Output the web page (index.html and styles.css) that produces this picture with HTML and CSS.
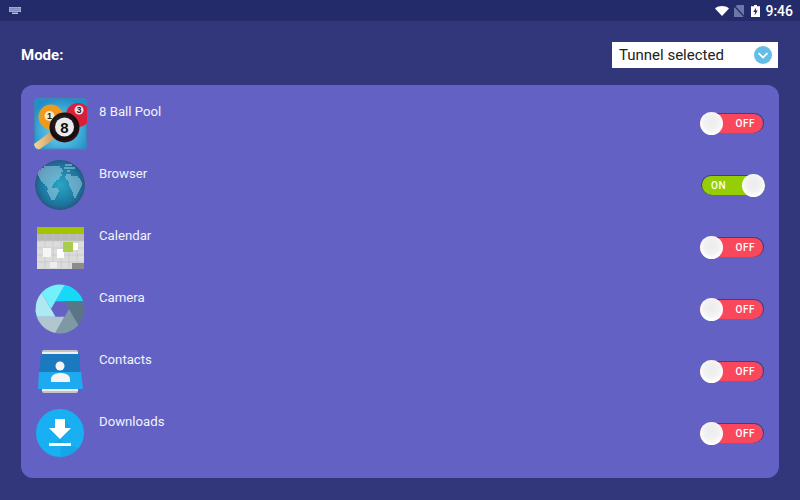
FILE: index.html
```html
<!DOCTYPE html>
<html lang="en">
<head>
    <meta charset="UTF-8">
    <title>Tunnel mode</title>
    <link rel="stylesheet" href="styles.css">
</head>
<body>

<!-- Status bar -->
<div class="status-bar">
    <svg width="12" height="7" viewBox="0 0 12 7">
        <rect x="0" y="0" width="12" height="5" fill="#b9bdda"/>
        <path d="M2 0V5M4 0V5M6 0V5M8 0V5M10 0V5M0 1.700H12M0 3.300H12" stroke="#5f659f" stroke-width="0.500"/>
        <rect x="3" y="5.500" width="6" height="1.500" fill="#b9bdda"/>
    </svg>
    <div class="status-right">
        <svg width="14" height="10" viewBox="0 0 14 10"><path d="M0 2.400C3.900-.8 10.100-.8 14 2.400L7 10Z" fill="#fff"/></svg>
        <svg class="sim-icon" width="10" height="12" viewBox="0 0 10 12"><path d="M3 0H10V12H0V3Z" fill="#6f75a6"/><path d="M0 0.500L10 11.500" stroke="#232b6b" stroke-width="1.200"/></svg>
        <svg width="9" height="12" viewBox="0 0 9 12"><path d="M3 0H6V1.200H9V12H0V1.200H3Z" fill="#fff"/><path d="M5.200 2.500L2.200 7H4.100L3.600 10.500L6.800 5.500H4.800Z" fill="#232b6b"/></svg>
        <span class="clock">9:46</span>
    </div>
</div>

<div class="mode-row">
    <span class="mode-label">Mode:</span>
    <div class="mode-select">
        <span>Tunnel selected</span>
        <svg width="18" height="18" viewBox="0 0 18 18"><circle cx="9" cy="9" r="9" fill="#63bde6"/><path d="M4.500 7.200L9 11.400L13.500 7.200" fill="none" stroke="#fff" stroke-width="1.800"/></svg>
    </div>
</div>

<div class="app-panel">

    <div class="app-row">
        <svg class="app-icon" viewBox="0 0 52 52">
            <defs>
                <radialGradient id="pool" cx="50%" cy="60%" r="60%"><stop offset="0" stop-color="#7ddcf5"/><stop offset="1" stop-color="#1f8ec9"/></radialGradient>
                <radialGradient id="ball8" cx="45%" cy="40%" r="60%"><stop offset="0" stop-color="#3a3034"/><stop offset="0.8" stop-color="#150c0d"/><stop offset="1" stop-color="#3a0f14"/></radialGradient>
                <linearGradient id="cue" x1="0" y1="0" x2="1" y2="0"><stop offset="0" stop-color="#f3d6a0"/><stop offset="1" stop-color="#c98f4e"/></linearGradient>
                <clipPath id="poolClip"><rect x="0" y="1" width="53" height="52" rx="4"/></clipPath>
            </defs>
            <g clip-path="url(#poolClip)">
                <rect x="0" y="1" width="53" height="52" fill="url(#pool)"/>
                <rect x="0.700" y="1.700" width="51.600" height="50.600" rx="4" fill="none" stroke="#3f86b5" stroke-width="1.400"/>
                <circle cx="17" cy="20" r="12.500" fill="#ee9a1d"/>
                <circle cx="15.500" cy="19" r="5" fill="#f8e8c8"/>
                <text x="15.500" y="22" class="ball-num">1</text>
                <circle cx="44" cy="18" r="12" fill="#d8203a"/>
                <circle cx="45" cy="13" r="4.500" fill="#f6dfe0"/>
                <text x="45" y="16" class="ball-num">3</text>
                <path d="M0 47L19 33L24 39L6 52Q1 53 0 47Z" fill="url(#cue)"/>
                <path d="M17 34L21 31L26 37L22 40Z" fill="#6e7a80"/>
                <circle cx="30.500" cy="30.500" r="15" fill="url(#ball8)"/>
                <circle cx="30.500" cy="30" r="9.500" fill="#ecebef"/>
                <text x="30.500" y="35.500" class="ball-eight">8</text>
            </g>
        </svg>
        <span class="app-name">8 Ball Pool</span>
        <div class="toggle off"><span class="knob"></span><span class="toggle-text">OFF</span></div>
    </div>

    <div class="app-row">
        <svg class="app-icon" viewBox="0 0 52 52">
            <defs>
                <radialGradient id="globe" cx="50%" cy="50%" r="52%"><stop offset="0" stop-color="#2ba6c6"/><stop offset="0.75" stop-color="#1c769f"/><stop offset="1" stop-color="#2a527f"/></radialGradient>
            </defs>
            <circle cx="26" cy="26" r="25" fill="url(#globe)"/>
            <path d="M10 8H26M7 10H28M5 12H29M4 14H27M4 16H28M5 18H26M6 20H25M7 22H22M9 24H20M11 26H19M13 28H18M14 30H24M13 32H25M14 34H24M15 36H23M16 38H22M17 40H21M31 6H38M30 9H41M33 12H36M32 16H37M31 18H44M32 20H46M34 22H47M35 24H48M35 26H48M36 28H47M37 30H46M38 32H45M39 34H44M39 36H43M40 38H42" stroke="#a9d3e8" stroke-width="1.100" fill="none"/>
        </svg>
        <span class="app-name">Browser</span>
        <div class="toggle on"><span class="toggle-text">ON</span><span class="knob"></span></div>
    </div>

    <div class="app-row">
        <svg class="app-icon" viewBox="0 0 52 52">
            <rect x="3" y="6" width="47" height="42" fill="#dcdcdc"/>
            <rect x="3" y="6" width="47" height="7" fill="#a4c400"/>
            <rect x="3" y="13" width="47" height="7" fill="#b8b8b8"/>
            <path d="M11 13V48M19 13V48M27 13V48M35 13V48M43 13V48M3 20H50M3 27H50M3 34H50M3 41H50" stroke="#c6c6c6" stroke-width="0.700"/>
            <rect x="9" y="27" width="8" height="9" fill="#f6f6f6"/>
            <rect x="23" y="28" width="7" height="9" fill="#fff"/>
            <rect x="39" y="22" width="5" height="7" fill="#fff"/>
            <rect x="29" y="21" width="10" height="10" fill="#a9cc4c"/>
            <rect x="16" y="41" width="7" height="6" fill="#eeeeee"/>
            <rect x="38" y="42" width="12" height="6" fill="#8c8c8c"/>
        </svg>
        <span class="app-name">Calendar</span>
        <div class="toggle off"><span class="knob"></span><span class="toggle-text">OFF</span></div>
    </div>

    <div class="app-row">
        <svg class="app-icon" viewBox="0 0 52 52">
            <!-- six blades, one path rotated round the centre -->
            <path d="M21.500 18.200H49.200A24.500 24.500 0 0 0 30.860 2Z" fill="#16d9f8"/>
            <path d="M21.500 18.200H49.200A24.500 24.500 0 0 0 30.860 2Z" fill="#5a7585" transform="rotate(60 26 26)"/>
            <path d="M21.500 18.200H49.200A24.500 24.500 0 0 0 30.860 2Z" fill="#7e98a5" transform="rotate(120 26 26)"/>
            <path d="M21.500 18.200H49.200A24.500 24.500 0 0 0 30.860 2Z" fill="#b2c6ce" transform="rotate(180 26 26)"/>
            <path d="M21.500 18.200H49.200A24.500 24.500 0 0 0 30.860 2Z" fill="#aee9f2" transform="rotate(240 26 26)"/>
            <path d="M21.500 18.200H49.200A24.500 24.500 0 0 0 30.860 2Z" fill="#72f0fb" transform="rotate(300 26 26)"/>
        </svg>
        <span class="app-name">Camera</span>
        <div class="toggle off"><span class="knob"></span><span class="toggle-text">OFF</span></div>
    </div>

    <div class="app-row">
        <svg class="app-icon" viewBox="0 0 52 52">
            <rect x="8" y="5" width="36" height="43" rx="2" fill="#c4c4c4"/>
            <rect x="8" y="7" width="36" height="39" fill="#eeeeee"/>
            <path d="M7 9H46V28H5Z" fill="#1a79bf"/>
            <path d="M5 27H47L49 44H4Z" fill="#1eaaf1"/>
            <circle cx="26" cy="21" r="4.500" fill="#f4f4f4"/>
            <path d="M17 34C17 26 36 26 36 34V37H17Z" fill="#f4f4f4"/>
        </svg>
        <span class="app-name">Contacts</span>
        <div class="toggle off"><span class="knob"></span><span class="toggle-text">OFF</span></div>
    </div>

    <div class="app-row">
        <svg class="app-icon" viewBox="0 0 52 52">
            <circle cx="26" cy="26" r="24" fill="#18b0f2"/>
            <path d="M31 12L37 21L26 33L15 39H37L45 41A24 24 0 0 1 26 50Z" fill="#1494d8" opacity="0.350"/>
            <path d="M21 12H31V21H37L26 32L15 21H21Z" fill="#fff"/>
            <rect x="15" y="36" width="22" height="3" fill="#fff"/>
        </svg>
        <span class="app-name">Downloads</span>
        <div class="toggle off"><span class="knob"></span><span class="toggle-text">OFF</span></div>
    </div>

</div>

</body>
</html>
```

FILE: styles.css
```css
body {
    margin: 0;
    height: 500px;
    overflow: hidden;
    background-color: #31377a;
    font-family: Roboto, "Liberation Sans", sans-serif;
    color: white;
}

.status-bar {
    display: flex;
    justify-content: space-between;
    align-items: center;
    height: 21px;
    padding: 0 7px 0 9px;
    background-color: #232b6b;
}

.status-right {
    display: flex;
    align-items: center;
    gap: 5px;
}

.sim-icon {
    margin-right: 2px;
}

.clock {
    font-size: 14px;
    font-weight: 500;
}

.mode-row {
    display: flex;
    justify-content: space-between;
    align-items: center;
    height: 26px;
    margin: 21px 22px 17px 21px;
}

.mode-label {
    font-size: 15px;
    font-weight: 700;
}

.mode-select {
    display: flex;
    justify-content: space-between;
    align-items: center;
    width: 166px;
    height: 26px;
    box-sizing: border-box;
    padding: 0 6px 0 7px;
    background-color: white;
    color: #222;
    font-size: 15px;
}

.app-panel {
    height: 393px;
    margin: 0 21px;
    padding: 12px 14px 0 13px;
    box-sizing: border-box;
    background-color: #6362c4;
    border-radius: 12px;
}

.app-row {
    display: flex;
    align-items: flex-start;
    height: 62px;
}

.app-icon {
    width: 52px;
    height: 52px;
    flex-shrink: 0;
    overflow: visible;
}

.app-name {
    flex: 1;
    margin: 7px 0 0 13px;
    font-size: 13.2px;
    color: #f2f2fb;
}

.toggle {
    position: relative;
    display: flex;
    align-items: center;
    box-sizing: border-box;
    width: 64px;
    height: 20px;
    margin-top: 16px;
    border-radius: 10px;
    font-size: 10px;
    font-weight: 500;
    letter-spacing: 0.5px;
}

.toggle.off {
    justify-content: flex-end;
    margin-right: 1px;
    padding-right: 9px;
    background-color: #f9475c;
    box-shadow: inset 0 1px 0 #3a3f8a, inset -1px 0 0 #3a3f8a;
}

.toggle.on {
    padding-left: 10px;
    background-color: #95ce04;
    box-shadow: inset 0 1px 0 #3a3f8a, inset 1px 0 0 #3a3f8a;
}

.knob {
    position: absolute;
    top: -1px;
    width: 23px;
    height: 23px;
    border-radius: 50%;
    background: radial-gradient(circle at 50% 42%, #ececec 0, #f2f2f2 45%, #fff 70%);
}

.off .knob {
    left: 0;
}

.on .knob {
    right: 0;
}

.ball-num {
    font-family: "Liberation Sans", sans-serif;
    font-size: 9px;
    font-weight: 700;
    text-anchor: middle;
    fill: #222;
}

.ball-eight {
    font-family: "Liberation Sans", sans-serif;
    font-size: 15px;
    font-weight: 700;
    text-anchor: middle;
    fill: #111;
}
```
